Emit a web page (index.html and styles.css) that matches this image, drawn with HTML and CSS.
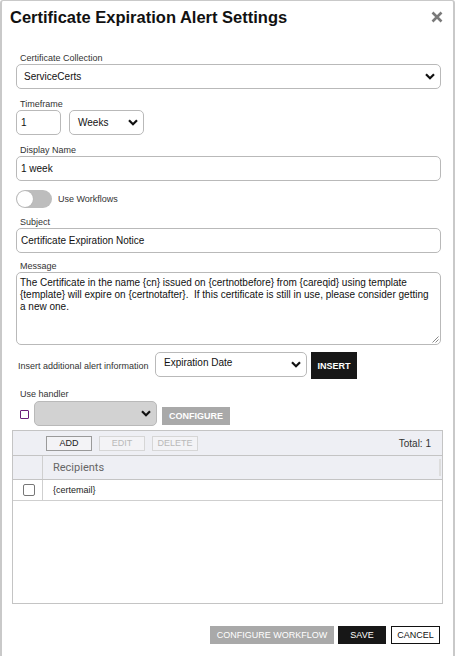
FILE: index.html
```html
<!DOCTYPE html>
<html>
<head>
<meta charset="utf-8">
<link rel="stylesheet" href="styles.css">
</head>
<body>
<div class="dialog">
  <div class="header">
    <h1 class="title">Certificate Expiration Alert Settings</h1>
    <svg class="close" viewBox="0 0 12 12"><path d="M1.5 1.5 L10.5 10.5 M10.5 1.5 L1.5 10.5" /></svg>
  </div>
  <div class="body">
    <div class="field">
      <label class="label">Certificate Collection</label>
      <div class="select wide"><span>ServiceCerts</span><svg class="chev" viewBox="0 0 10 7"><path d="M1 1.2 L5 5.2 L9 1.2" /></svg></div>
    </div>
    <div class="field">
      <label class="label">Timeframe</label>
      <div class="row">
        <div class="input num">1</div>
        <div class="select weeks"><span>Weeks</span><svg class="chev" viewBox="0 0 10 7"><path d="M1 1.2 L5 5.2 L9 1.2" /></svg></div>
      </div>
    </div>
    <div class="field">
      <label class="label">Display Name</label>
      <div class="input wide">1 week</div>
    </div>
    <div class="toggle-row">
      <span class="toggle"><span class="knob"></span></span>
      <span class="toggle-label">Use Workflows</span>
    </div>
    <div class="field subject">
      <label class="label">Subject</label>
      <div class="input wide">Certificate Expiration Notice</div>
    </div>
    <div class="field">
      <label class="label">Message</label>
      <div class="textarea">The Certificate in the name {cn} issued on {certnotbefore} from {careqid} using template {template} will expire on {certnotafter}.&nbsp; If this certificate is still in use, please consider getting a new one.<svg class="grip" viewBox="0 0 8 8"><path d="M7.5 1.5 L1.5 7.5 M7.5 4.5 L4.5 7.5" /></svg></div>
    </div>
    <div class="insert-row">
      <span class="insert-label">Insert additional alert information</span>
      <div class="select exp"><span>Expiration Date</span><svg class="chev" viewBox="0 0 10 7"><path d="M1 1.2 L5 5.2 L9 1.2" /></svg></div>
      <button class="btn dark insert">INSERT</button>
    </div>
    <div class="handler">
      <label class="label">Use handler</label>
      <div class="row handler-row">
        <span class="cbox"></span>
        <div class="select disabled"><span></span><svg class="chev" viewBox="0 0 10 7"><path d="M1 1.2 L5 5.2 L9 1.2" /></svg></div>
        <button class="btn gray configure">CONFIGURE</button>
      </div>
    </div>
    <div class="grid">
      <div class="toolbar">
        <button class="tbtn">ADD</button>
        <button class="tbtn off">EDIT</button>
        <button class="tbtn off">DELETE</button>
        <span class="total">Total: 1</span>
      </div>
      <div class="ghead">
        <div class="gcheck"></div>
        <div class="gcol">Recipients</div>
        <div class="gscroll"></div>
      </div>
      <div class="grow">
        <div class="gcheck"><span class="rcbox"></span></div>
        <div class="gcell">{certemail}</div>
      </div>
      <div class="gempty"></div>
    </div>
    <div class="footer">
      <button class="btn gray fbtn wf">CONFIGURE WORKFLOW</button>
      <button class="btn dark fbtn save">SAVE</button>
      <button class="btn light fbtn cancel">CANCEL</button>
    </div>
  </div>
</div>
</body>
</html>
```
FILE: styles.css
```css
* { box-sizing: border-box; }
html, body { margin: 0; padding: 0; background: #fff; }
body { font-family: "Liberation Sans", Arial, sans-serif; color: #222; width: 456px; height: 656px; overflow: hidden; }

.dialog {
  width: 455px;
  height: 660px;
  border: 2px solid #c9c9c9;
  border-top-width: 1px;
  border-radius: 3px;
  background: #fff;
}

.header {
  display: flex;
  justify-content: space-between;
  align-items: flex-start;
  padding: 6px 10px 0 8px;
  height: 51px;
}
.title {
  margin: 0;
  font-size: 16.5px;
  font-weight: bold;
  color: #111;
  line-height: 20px;
}
.close {
  width: 12px;
  height: 12px;
  margin-top: 4px;
  stroke: #7a7a7a;
  stroke-width: 2.6;
  fill: none;
}

.body { padding: 0 12px 0 14px; }

.field { margin-bottom: 9px; }
.label {
  display: block;
  font-size: 9px;
  color: #333;
  line-height: 12px;
  margin: 0 0 0 4px;
}

.row { display: flex; align-items: center; }

.select, .input {
  height: 25px;
  border: 1px solid #b9b9b9;
  border-radius: 5px;
  font-size: 10px;
  color: #111;
  display: flex;
  align-items: center;
  padding: 0 6px 0 4px;
}
.wide { width: 425px; }
.select { justify-content: space-between; padding-left: 7px; }
.chev { width: 10px; height: 7px; fill: none; stroke: #111; stroke-width: 2.2; flex: none; margin-right: -1px; }
.num { width: 45px; }
.weeks { width: 75px; margin-left: 8px; padding-left: 8px; }

.toggle-row { display: flex; align-items: center; margin: 0 0 8px 0; }
.toggle {
  width: 36px; height: 18px; border-radius: 9px; background: #bdbdbd;
  position: relative; display: inline-block;
}
.knob {
  position: absolute; left: 1px; top: 1px; width: 16px; height: 16px;
  border-radius: 50%; background: #fff; box-shadow: 0 0 1px #999;
}
.toggle-label { font-size: 9px; color: #333; margin-left: 6px; }

.subject { margin-bottom: 7px; }

.textarea {
  position: relative;
  width: 425px;
  height: 73px;
  border: 1px solid #b9b9b9;
  border-radius: 5px;
  font-size: 10px;
  line-height: 12px;
  padding: 4px 8px 4px 3px;
  color: #111;
}
.grip { position: absolute; right: 1px; bottom: 1px; width: 8px; height: 8px; stroke: #888; stroke-width: 1; fill: none; }

.insert-row { display: flex; align-items: center; margin: -2px 0 0 2px; }
.insert-label { font-size: 9px; color: #333; width: 137px; }
.exp { width: 152px; padding-left: 8px; align-self: flex-start; }
.exp span { margin-top: -4px; }

.btn {
  border: none;
  font-family: "Liberation Sans", Arial, sans-serif;
  font-size: 9px;
  color: #fff;
  padding: 0;
  cursor: default;
}
.dark { background: #171717; }
.gray { background: #a9a9a9; }
.light { background: #fff; color: #111; border: 1px solid #111; }
.insert { width: 46px; height: 27px; margin-left: 4px; font-weight: bold; }

.handler { margin-top: 9px; }
.handler .label { margin-bottom: 1px; }
.handler-row { margin-left: 4px; }
.cbox { width: 9px; height: 9px; border: 1.5px solid #6b1f7a; display: inline-block; background: #fff; border-radius: 1px; margin-top: 1px; }
.disabled { width: 123px; background: #d2d2d2; border-color: #b9b9b9; margin-left: 5px; }
.configure { width: 68px; height: 18px; margin-left: 5px; font-weight: bold; margin-top: 4px; }

.grid {
  margin: 4px 0 0 -4px;
  width: 431px;
  height: 174px;
  border: 1px solid #c4c4c4;
  display: flex;
  flex-direction: column;
}
.toolbar {
  height: 25px;
  background: #eeeff4;
  border-bottom: 1px solid #c4c4c4;
  display: flex;
  align-items: center;
  padding-left: 33px;
}
.tbtn {
  width: 46px;
  height: 15px;
  border: 1px solid #9a9a9a;
  background: #f3f3f6;
  font-family: "Liberation Sans", Arial, sans-serif;
  font-size: 9px;
  color: #222;
  padding: 0;
  margin-right: 7px;
}
.tbtn.off { border-color: #d6d6d6; color: #b9b9b9; }
.total { margin-left: auto; margin-right: 11px; font-size: 10px; color: #333; }

.ghead {
  height: 24px;
  background: #eeeff4;
  border-bottom: 1px solid #c4c4c4;
  display: flex;
}
.gcheck { width: 30px; border-right: 1px solid #cfcfcf; display: flex; align-items: center; justify-content: center; }
.gcol { flex: 1; padding-left: 10px; display: flex; align-items: center; font-family: "Roboto", sans-serif; font-size: 11px; color: #666; }
.gscroll { width: 2px; margin: 3px 1px 3px 0; background: #ddd; }
.grow { height: 21px; border-bottom: 1px solid #cfcfcf; display: flex; }
.grow .gcheck { padding-left: 2px; }
.rcbox { width: 12px; height: 12px; border: 1px solid #777; border-radius: 2px; background: #fff; }
.gcell { flex: 1; padding-left: 10px; display: flex; align-items: center; font-size: 9px; color: #222; }
.gempty { flex: 1; }

.footer {
  display: flex;
  justify-content: flex-end;
  margin-top: 22px;
  margin-right: 1px;
}
.fbtn { height: 18px; }
.wf { width: 124px; }
.save { width: 48px; margin-left: 4px; }
.cancel { width: 49px; margin-left: 5px; }
```
